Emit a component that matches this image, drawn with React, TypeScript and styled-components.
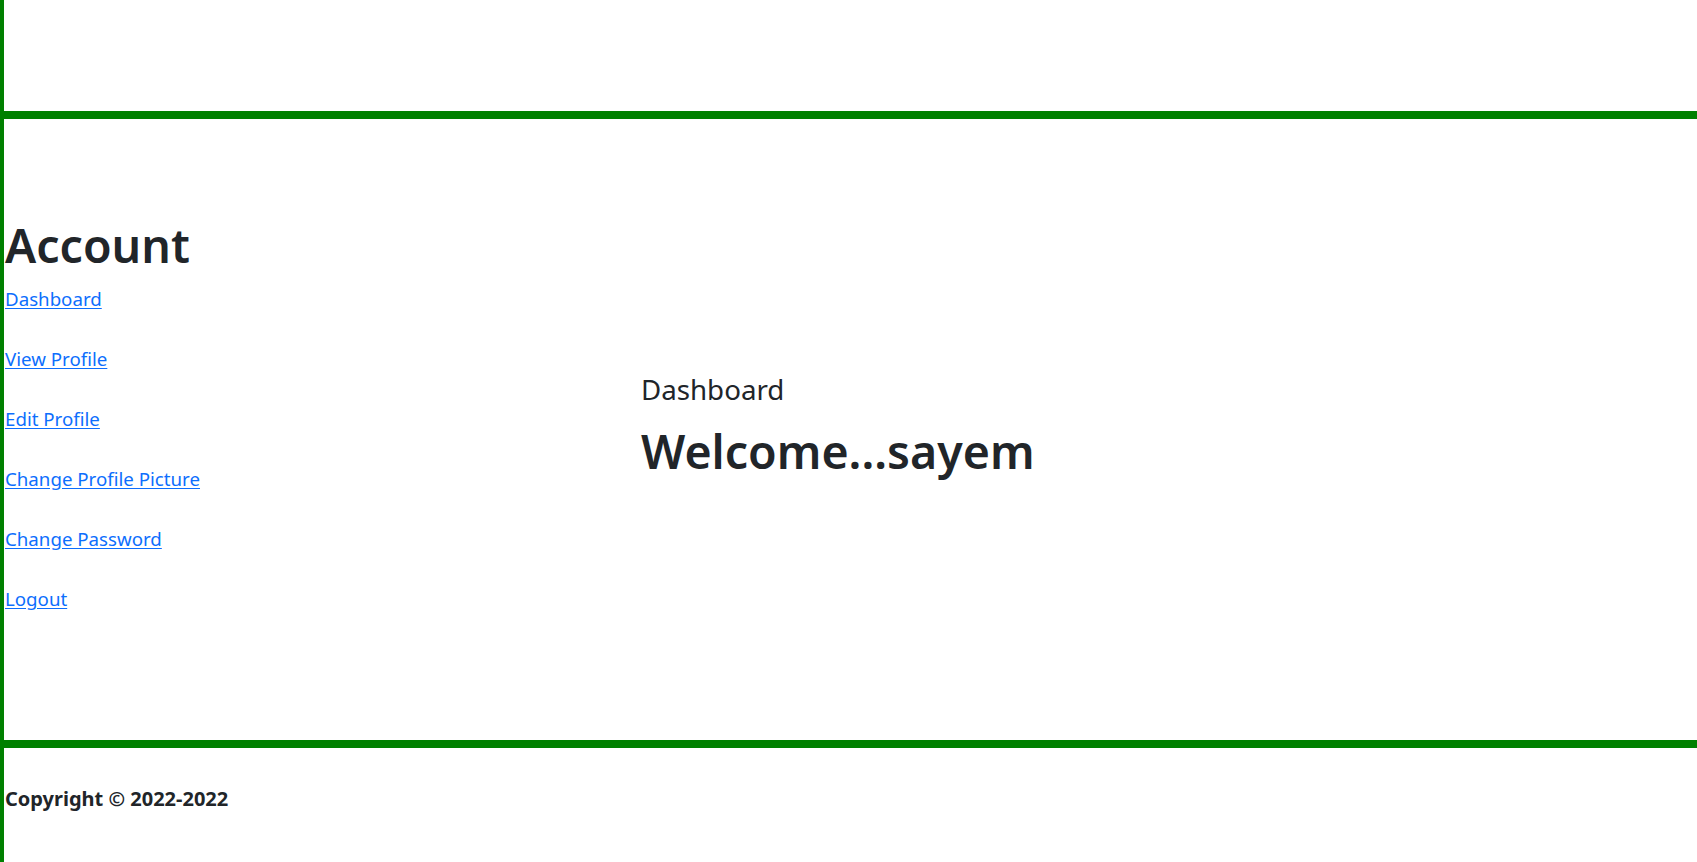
import React from "react";
import styled, { createGlobalStyle } from "styled-components";

const GlobalStyle = createGlobalStyle`
  html, body {
    margin: 0;
    padding: 0;
    background: #ffffff;
  }
  body {
    font-family: "Noto Sans", "Open Sans", sans-serif;
    font-size: 20px;
    line-height: 1.5;
    color: #212529;
  }
  * { box-sizing: border-box; }
`;

const Page = styled.div`
  min-height: 100vh;
  border-left: 4px solid #008000;
  display: flex;
  flex-direction: column;
`;

const Header = styled.header`
  height: 111px;
`;

const Main = styled.main`
  height: 637px;
  border-top: 8px solid #008000;
  border-bottom: 8px solid #008000;
  display: grid;
  grid-template-columns: 636px 1fr;
  padding-left: 1px;
`;

const Sidebar = styled.nav`
  padding-top: 96px;
  display: flex;
  flex-direction: column;
  align-items: flex-start;
`;

const Heading = styled.h1<{ $mb?: number }>`
  margin: 0 0 ${(p) => p.$mb ?? 0}px 0;
  font-size: 46.5px;
  font-weight: 600;
  line-height: 60px;
  color: #212529;
`;

const NavLink = styled.a`
  display: block;
  font-size: 18.7px;
  line-height: 30px;
  margin-bottom: 30px;
  color: #0d6efd;
  text-decoration: underline;
  text-underline-offset: 2px;
`;

const Content = styled.section`
  padding-top: 252px;
`;

const SubTitle = styled.div`
  font-size: 27.7px;
  line-height: 36px;
  font-weight: 400;
  margin-bottom: 14px;
`;

const Footer = styled.footer`
  padding: 36px 0 0 1px;
  flex: 1;
`;

const Copyright = styled.p`
  margin: 0;
  font-size: 20px;
  font-weight: 700;
  line-height: 30px;
`;

const links = [
  "Dashboard",
  "View Profile",
  "Edit Profile",
  "Change Profile Picture",
  "Change Password",
  "Logout",
];

export default function App() {
  return (
    <>
      <GlobalStyle />
      <Page>
        <Header />
        <Main>
          <Sidebar>
            <Heading $mb={9}>Account</Heading>
            {links.map((l) => (
              <NavLink key={l} href="#">
                {l}
              </NavLink>
            ))}
          </Sidebar>
          <Content>
            <SubTitle>Dashboard</SubTitle>
            <Heading>Welcome...sayem</Heading>
          </Content>
        </Main>
        <Footer>
          <Copyright>Copyright © 2022-2022</Copyright>
        </Footer>
      </Page>
    </>
  );
}
